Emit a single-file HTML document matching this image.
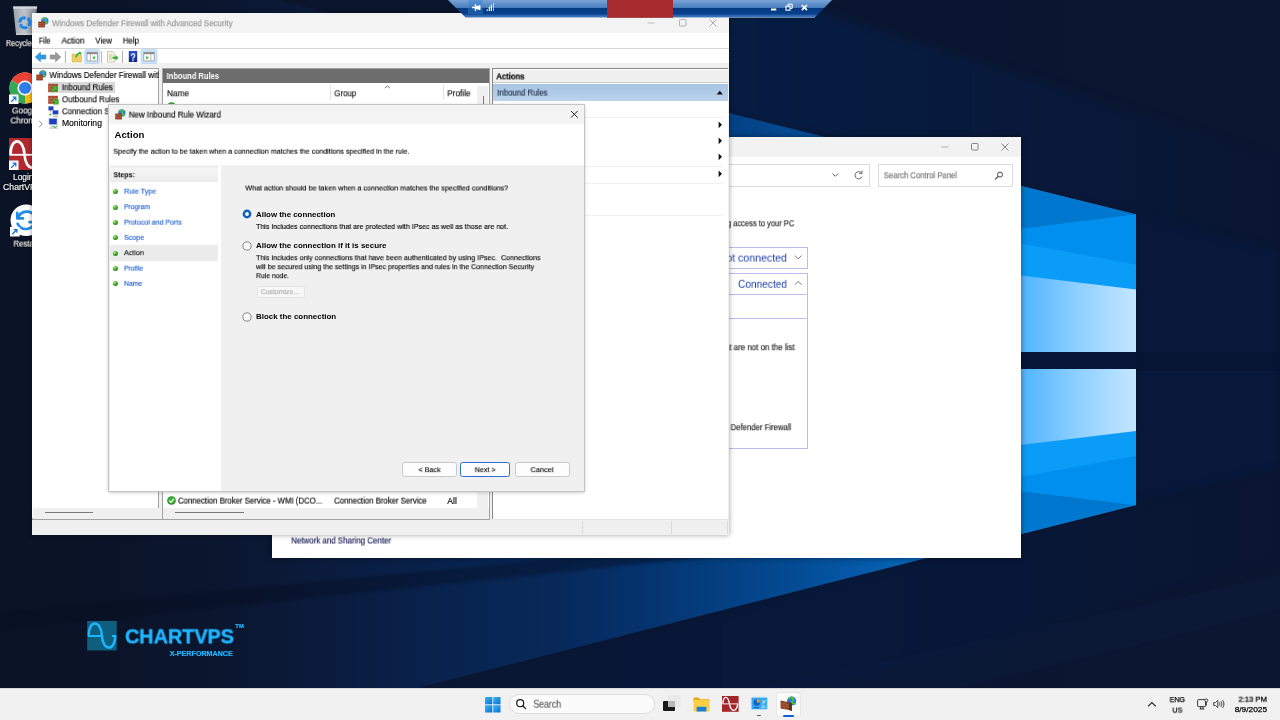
<!DOCTYPE html>
<html lang="en"><head><meta charset="utf-8"><title>Windows Defender Firewall - New Inbound Rule Wizard</title>
<style>
html,body{margin:0;padding:0;width:1280px;height:720px;overflow:hidden;background:#0a1530;font-family:'Liberation Sans',sans-serif;}
#scr{position:absolute;left:0;top:0;width:1280px;height:720px;overflow:hidden;}
.a{position:absolute;}
.t{position:absolute;white-space:pre;transform-origin:0 0;will-change:transform;-webkit-text-stroke:0.14px currentColor;}
svg{position:absolute;overflow:visible;}
</style></head><body><div id="scr">
<svg class="a" style="left:0;top:0" width="1280" height="720" viewBox="0 0 1280 720">
<defs>
<linearGradient id="bg" x1="0" y1="0" x2="1" y2="0">
<stop offset="0" stop-color="#0b1327"/><stop offset="0.35" stop-color="#0b152c"/><stop offset="0.7" stop-color="#0a1631"/><stop offset="1" stop-color="#0b1630"/>
</linearGradient>
<linearGradient id="beam" gradientUnits="userSpaceOnUse" x1="1021" y1="0" x2="50" y2="0">
<stop offset="0" stop-color="#0a74d2"/><stop offset="0.125" stop-color="#0562b4"/><stop offset="0.228" stop-color="#044c96"/><stop offset="0.33" stop-color="#043c7c"/><stop offset="0.392" stop-color="#05326c"/><stop offset="0.475" stop-color="#07295a"/><stop offset="0.588" stop-color="#08234e"/><stop offset="0.69" stop-color="#0a1d41"/><stop offset="0.845" stop-color="#0b1731" stop-opacity="0.6"/><stop offset="1" stop-color="#0b1327" stop-opacity="0"/>
</linearGradient>
<linearGradient id="beamshade" gradientUnits="userSpaceOnUse" x1="0" y1="150" x2="0" y2="560">
<stop offset="0" stop-color="#061a3c" stop-opacity="0.55"/><stop offset="0.25" stop-color="#061a3c" stop-opacity="0"/><stop offset="1" stop-color="#061a3c" stop-opacity="0"/>
</linearGradient>
<linearGradient id="upband" gradientUnits="userSpaceOnUse" x1="700" y1="0" x2="1280" y2="0">
<stop offset="0" stop-color="#061c42"/><stop offset="0.35" stop-color="#071b3f"/><stop offset="0.7" stop-color="#091838"/><stop offset="1" stop-color="#0a1632"/>
</linearGradient>
<linearGradient id="lowband" gradientUnits="userSpaceOnUse" x1="400" y1="0" x2="1280" y2="0">
<stop offset="0" stop-color="#0a1733"/><stop offset="0.5" stop-color="#07183a"/><stop offset="1" stop-color="#0a1632"/>
</linearGradient>
<linearGradient id="lite" gradientUnits="userSpaceOnUse" x1="1021" y1="0" x2="1136" y2="0">
<stop offset="0" stop-color="#4fb4ff"/><stop offset="0.5" stop-color="#8fd0ff"/><stop offset="1" stop-color="#c4e6ff"/>
</linearGradient>
</defs>
<filter id="soft2" color-interpolation-filters="sRGB" x="-5%" y="-20%" width="110%" height="140%"><feGaussianBlur stdDeviation="1.5"/></filter>
<filter id="soft" color-interpolation-filters="sRGB" x="-5%" y="-5%" width="110%" height="110%"><feGaussianBlur stdDeviation="4"/></filter>
<rect width="1280" height="720" fill="url(#bg)"/>
<!-- bluish bands around beam -->
<polygon points="600,0 785,0 1280,160 1280,251 1021,186 600,81" fill="url(#upband)" filter="url(#soft)"/>
<polygon points="1136,214 1280,251 1280,470 1136,505" fill="#07183b" filter="url(#soft)"/>
<polygon points="1021,534 1136,505 1280,470 1280,560 700,720 292,720" fill="url(#lowband)" filter="url(#soft)"/>
<rect x="1136" y="352" width="144" height="19" fill="#061430" opacity="0.7"/>
<!-- light beam -->
<polygon points="1021,186 277,0 0,0 0,720 292,720 1021,534" fill="url(#beam)"/>
<!-- faint floor streaks -->
<polygon points="0,612 720,543 720,556 0,630" fill="#050c1e" opacity="0.38" filter="url(#soft2)"/>
<polygon points="760,688 1280,575 1280,610 960,688" fill="#0c1f44" opacity="0.3"/>
<!-- window panes -->
<g>
<polygon points="1021,186 1136,214.5 1136,352 1021,352" fill="#0a9cf6"/>
<polygon points="1021,186 1136,214.5 1021,229" fill="#0077ce"/>
<polygon points="1021,229 1136,214.5 1136,264.5 1021,243.5" fill="#008fee"/>
<polygon points="1021,275.5 1136,289.5 1136,352 1021,352" fill="url(#lite)"/>
<polygon points="1021,369 1136,369 1136,505 1021,534" fill="#0a9cf6"/>
<polygon points="1021,534 1136,505 1021,491" fill="#0077ce"/>
<polygon points="1021,491 1136,505 1136,456 1021,477" fill="#008fee"/>
<polygon points="1021,369 1136,369 1136,431 1021,445" fill="url(#lite)"/>
<rect x="1021" y="352" width="115" height="17" fill="#07173a"/>
</g>
</svg>
<svg class="a" style="left:9px;top:5px" width="32" height="32" viewBox="0 0 32 32">
<defs><linearGradient id="bin" x1="0" y1="0" x2="1" y2="0"><stop offset="0" stop-color="#a4aab2"/><stop offset="0.45" stop-color="#c9ced4"/><stop offset="1" stop-color="#8e949d"/></linearGradient></defs>
<polygon points="4.1,1.4 28.1,1.4 25,29.9 7.1,29.9" fill="url(#bin)" opacity="0.95"/>
<polygon points="4.1,1.4 28.1,1.4 27.85,3.8 4.35,3.8" fill="#d3d7db"/>
<polygon points="7,28.6 25.1,28.6 25,29.9 7.1,29.9" fill="#d3d7db" opacity="0.7"/>
<g fill="none" stroke="#1c86e6" stroke-width="3"><path d="M18.45 13.36A5.00 5.00 0 0 1 20.56 19.15" /><polygon points="19.15,21.32 23.03,19.95 18.08,18.34" fill="#1c86e6" stroke="none"/><path d="M18.15 22.01A5.00 5.00 0 0 1 12.08 20.95" /><polygon points="10.91,18.64 10.15,22.69 14.02,19.21" fill="#1c86e6" stroke="none"/><path d="M10.80 17.43A5.00 5.00 0 0 1 14.76 12.71" /><polygon points="17.35,12.84 14.22,10.17 15.30,15.25" fill="#1c86e6" stroke="none"/></g>
</svg><span class="t" style="left:6px;top:37px;font-size:8.4px;line-height:12px;color:#fff;transform:translate(0.00px,0.19px) scaleX(0.8594);text-shadow:0 0 2px #000,0.5px 0.5px 1px #000;">Recycle Bin</span><svg class="a" style="left:9px;top:72px" width="32" height="32" viewBox="0 0 32 32">
<circle cx="16" cy="16" r="15.5" fill="#fff"/>
<path d="M16 16 L2.6 8.2 A15.5 15.5 0 0 1 29.4 8.2 Z" fill="#ea4335"/>
<path d="M16 16 L29.4 8.2 A15.5 15.5 0 0 1 16 31.5 Z" fill="#fbbc05"/>
<path d="M16 16 L16 31.5 A15.5 15.5 0 0 1 2.6 8.2 Z" fill="#34a853"/>
<path d="M16 8.2 L29.4 8.2 A15.5 15.5 0 0 0 2.6 8.2 Z" fill="#ea4335"/>
<circle cx="16" cy="16" r="7.6" fill="#fff"/><circle cx="16" cy="16" r="6" fill="#2f7de8"/>
<rect x="0" y="22.5" width="9.5" height="9.5" fill="#fff"/><path d="M2.2 29.8l4.2-4.2M3.6 25.2h3.2v3.2" stroke="#1a73d8" stroke-width="1.3" fill="none"/>
</svg><span class="t" style="left:12px;top:104px;font-size:8.4px;line-height:12px;color:#fff;transform:translate(0.00px,0.49px) scaleX(0.9809);text-shadow:0 0 2px #000,0.5px 0.5px 1px #000;">Google</span><span class="t" style="left:10px;top:114px;font-size:8.4px;line-height:12px;color:#fff;transform:translate(0.50px,0.49px) scaleX(0.9733);text-shadow:0 0 2px #000,0.5px 0.5px 1px #000;">Chrome</span><svg class="a" style="left:9px;top:138px" width="32" height="32" viewBox="0 0 32 32">
<rect width="32" height="32" fill="#b3282d"/>
<path d="M1.500 16.500 C1.500 -1 14.500 -1 15.500 16.500 S 29.500 34 30.800 16.500" fill="none" stroke="#fff" stroke-width="2.700"/>
<path d="M0.500 16.800h31" stroke="#fff" stroke-width="1.800"/>
<rect x="0" y="22.5" width="9.5" height="9.5" fill="#fff"/><path d="M2.2 29.8l4.2-4.2M3.6 25.2h3.2v3.2" stroke="#1a73d8" stroke-width="1.3" fill="none"/>
</svg><span class="t" style="left:13px;top:171px;font-size:8.4px;line-height:12px;color:#fff;transform:translate(0.00px,0.19px) scaleX(1.0000);text-shadow:0 0 2px #000,0.5px 0.5px 1px #000;">Login</span><span class="t" style="left:3px;top:180px;font-size:8.4px;line-height:12px;color:#fff;transform:translate(0.10px,0.79px) scaleX(1.0309);text-shadow:0 0 2px #000,0.5px 0.5px 1px #000;">ChartVPS</span><svg class="a" style="left:10px;top:204px" width="32.500" height="32.500" viewBox="0 0 32 32">
<circle cx="16" cy="16" r="15.5" fill="#fff"/>
<path d="M8 13.5 A9 9 0 0 1 24.5 12.5 M24 19 A9 9 0 0 1 7.5 19.5" fill="none" stroke="#1e8be8" stroke-width="2.6" stroke-linecap="round"/>
<path d="M7.2 8.6v5.6h5.6" fill="none" stroke="#1e8be8" stroke-width="2.6" stroke-linecap="round" stroke-linejoin="round"/>
<path d="M24.8 23.4v-5.6h-5.6" fill="none" stroke="#1e8be8" stroke-width="2.6" stroke-linecap="round" stroke-linejoin="round"/>
<rect x="0" y="22.5" width="9.5" height="9.5" fill="#fff"/><path d="M2.2 29.8l4.2-4.2M3.6 25.2h3.2v3.2" stroke="#1a73d8" stroke-width="1.3" fill="none"/>
</svg><span class="t" style="left:13px;top:237px;font-size:8.4px;line-height:12px;color:#fff;transform:translate(0.50px,0.59px) scaleX(0.9222);text-shadow:0 0 2px #000,0.5px 0.5px 1px #000;">Restart</span><svg class="a" style="left:87px;top:621px" width="30" height="30" viewBox="0 0 30 30">
<rect x="0.2" width="29.5" height="29.4" fill="#0e5f7f"/>
<path d="M1.6 14.6 C1.6 -1.400 14 -1.400 14.900 14.600 S 28.300 30.600 28.300 14.600" fill="none" stroke="#1cb6ff" stroke-width="2.500"/>
<path d="M1 14.900h14M25 14.900h4" stroke="#1cb6ff" stroke-width="2"/>
</svg><span class="t" style="left:125px;top:623px;font-size:20.2px;line-height:27px;color:#20b6ff;font-weight:700;-webkit-text-stroke:0;transform:translate(0.00px,0.36px) scaleX(0.9816);-webkit-text-stroke:0.45px #20b6ff;">CHARTVPS</span><span class="t" style="left:235px;top:622px;font-size:5.2px;line-height:8px;color:#20b6ff;font-weight:700;-webkit-text-stroke:0;transform:translate(0.30px,0.46px) scaleX(1.1333);-webkit-text-stroke:0.2px #20b6ff;">TM</span><span class="t" style="left:169px;top:649px;font-size:6.4px;line-height:10px;color:#20b6ff;font-weight:700;-webkit-text-stroke:0;transform:translate(0.70px,0.10px) scaleX(1.1177);-webkit-text-stroke:0.2px #20b6ff;">X-PERFORMANCE</span><div class="a" style="left:272px;top:137px;width:749px;height:421px;background:#fff;box-shadow:0 0 6px rgba(0,0,0,0.45);"></div><div class="a" style="left:272px;top:137px;width:749px;height:20px;background:#f2f2f2;"></div><svg class="a" style="left:930px;top:137px" width="91" height="20" viewBox="0 0 91 20">
<path d="M11.5 10h7" stroke="#a8a8a8" stroke-width="0.9"/>
<rect x="41.5" y="6.5" width="6.5" height="6.5" rx="0.8" fill="none" stroke="#777" stroke-width="0.9"/>
<path d="M71.5 6.5l7 7M78.5 6.5l-7 7" stroke="#777" stroke-width="0.9"/>
</svg><div class="a" style="left:600px;top:164px;width:268px;height:20.500px;border:1px solid #dcdcdc;background:#fff;"></div><div class="a" style="left:878px;top:164px;width:133px;height:20.500px;border:1px solid #dcdcdc;background:#fff;"></div><svg class="a" style="left:828px;top:168px" width="40" height="14" viewBox="0 0 40 14">
<path d="M4.5 5.5l2.8 2.8 2.8-2.8" fill="none" stroke="#555" stroke-width="0.9"/>
<path d="M33.6 5.2a3.6 3.6 0 1 0 0.4 3.4" fill="none" stroke="#555" stroke-width="0.9"/><path d="M34 2.6v2.8h-2.8" fill="none" stroke="#555" stroke-width="0.9"/>
</svg><span class="t" style="left:883px;top:169px;font-size:8.4px;line-height:12px;color:#6d6d6d;transform:translate(0.80px,0.29px) scaleX(0.9195);">Search Control Panel</span><svg class="a" style="left:993px;top:170px" width="12" height="12" viewBox="0 0 12 12"><circle cx="7" cy="4.6" r="2.5" fill="none" stroke="#444" stroke-width="1"/><path d="M5.2 6.4l-3 3" stroke="#444" stroke-width="1.2"/></svg><span class="t" style="left:441px;top:217px;font-size:8.4px;line-height:12px;color:#1a1a1a;transform:translate(0.50px,0.29px) scaleX(0.9941);">Help protect your PC by preventing hackers or malicious software from gaining</span><span class="t" style="left:733px;top:217px;font-size:8.4px;line-height:12px;color:#1a1a1a;transform:translate(0.20px,0.29px) scaleX(0.8975);">access to your PC</span><div class="a" style="left:420px;top:247px;width:386px;height:20px;border:1px solid #bcbcee;"></div><div class="a" style="left:420px;top:273px;width:386px;height:174px;border:1px solid #bcbcee;"></div><div class="a" style="left:420px;top:294px;width:387px;height:1px;background:#bcbcee;"></div><div class="a" style="left:420px;top:318px;width:387px;height:1px;background:#bcbcee;"></div><span class="t" style="left:718px;top:249px;font-size:11.3px;line-height:16px;color:#1c3fa6;transform:translate(0.50px,0.57px) scaleX(0.9402);-webkit-text-stroke:0;">Not connected</span><span class="t" style="left:738px;top:275px;font-size:11.3px;line-height:16px;color:#1c3fa6;transform:translate(0.00px,0.77px) scaleX(0.8965);-webkit-text-stroke:0;">Connected</span><svg class="a" style="left:793px;top:252px" width="12" height="40" viewBox="0 0 12 40">
<path d="M2 3.6l3.2 3.2 3.2-3.2" fill="none" stroke="#666" stroke-width="0.9"/>
<path d="M2 32.6l3.2-3.2 3.2 3.2" fill="none" stroke="#666" stroke-width="0.9"/></svg><span class="t" style="left:617px;top:341px;font-size:8.4px;line-height:12px;color:#1a1a1a;transform:translate(0.00px,0.19px) scaleX(0.9219);">Block all connections to apps that</span><span class="t" style="left:733px;top:341px;font-size:8.4px;line-height:12px;color:#1a1a1a;transform:translate(0.60px,0.19px) scaleX(0.9494);">are not on the list</span><span class="t" style="left:699px;top:421px;font-size:8.4px;line-height:12px;color:#1a1a1a;transform:translate(0.00px,0.19px) scaleX(0.8680);">Windows</span><span class="t" style="left:730px;top:421px;font-size:8.4px;line-height:12px;color:#1a1a1a;transform:translate(0.60px,0.19px) scaleX(0.9232);">Defender Firewall</span><span class="t" style="left:291px;top:534px;font-size:8.4px;line-height:12px;color:#101050;transform:translate(0.30px,0.49px) scaleX(0.9433);">Network and Sharing Center</span><div class="a" style="left:32px;top:13px;width:697px;height:522px;background:#f0f0f0;box-shadow:0 0 5px rgba(0,0,0,0.4);"></div><div class="a" style="left:32px;top:13px;width:697px;height:20px;background:#f3f3f3;"></div><div class="a" style="left:32px;top:33px;width:697px;height:30px;background:#fff;"></div><div class="a" style="left:32px;top:48px;width:697px;height:1px;background:#d4d4d4;"></div><svg class="a" style="left:37.5px;top:17px" width="11" height="11" viewBox="0 0 11 11">
<circle cx="6.8" cy="3.9" r="3.7" fill="#2e7fd6"/><path d="M4.6 2.2c1.2-1.6 3-1.2 3.2 0.2s-1 1.6-0.6 2.6 2 0.4 2.4 1.6" fill="none" stroke="#56c13c" stroke-width="1.5"/>
<rect x="0.3" y="4.6" width="6.6" height="5.8" fill="#8c3a1f"/><path d="M0.3 6.5h6.6M0.3 8.5h6.6M3.6 4.6v1.9M2 6.5v2M5.2 6.5v2M3.6 8.5v1.9" stroke="#c4734a" stroke-width="0.5"/>
</svg><span class="t" style="left:52px;top:17px;font-size:8.4px;line-height:12px;color:#949494;transform:translate(0.00px,0.19px) scaleX(0.9457);">Windows Defender Firewall with Advanced Security</span><svg class="a" style="left:630px;top:13px" width="99" height="20" viewBox="0 0 99 20">
<path d="M17.5 10h7" stroke="#b5b5b5" stroke-width="0.9"/>
<rect x="49.5" y="6.5" width="6.5" height="6.5" rx="0.8" fill="none" stroke="#a8a8a8" stroke-width="0.9"/>
<path d="M79.5 6.5l7 7M86.500 6.5l-7 7" stroke="#a8a8a8" stroke-width="0.9"/>
</svg><span class="t" style="left:38px;top:34px;font-size:8.4px;line-height:12px;color:#000;transform:translate(0.80px,0.59px) scaleX(0.8741);">File</span><span class="t" style="left:61px;top:34px;font-size:8.4px;line-height:12px;color:#000;transform:translate(0.50px,0.59px) scaleX(0.9922);">Action</span><span class="t" style="left:95px;top:34px;font-size:8.4px;line-height:12px;color:#000;transform:translate(0.30px,0.59px) scaleX(0.9270);">View</span><span class="t" style="left:122px;top:34px;font-size:8.4px;line-height:12px;color:#000;transform:translate(0.80px,0.59px) scaleX(0.9400);">Help</span><svg class="a" style="left:32px;top:49px" width="130" height="15" viewBox="0 0 130 15">
<defs><linearGradient id="hb" x1="0" y1="0" x2="0" y2="1"><stop offset="0" stop-color="#2a4fd0"/><stop offset="1" stop-color="#10247e"/></linearGradient></defs>
<path d="M3.2 8l5.2-4.8v2.8h5.4v4h-5.4v2.800z" fill="#2f9be8" stroke="#1b78c8" stroke-width="0.5"/>
<path d="M28.800 8l-5.200-4.800v2.800h-5.400v4h5.400v2.800z" fill="#9a9a9a" stroke="#7a7a7a" stroke-width="0.5"/>
<path d="M33.400 2v12" stroke="#9a9a9a" stroke-width="0.8"/>
<path d="M40 5h3.200l1 1.200h5.300v6.800h-9.500z" fill="#f0d066" stroke="#c9a63a" stroke-width="0.5"/><path d="M43.200 8.200c0.600-2.600 2-4 4-4.600l-0.600-1.200 3 1.200-1.400 2.600-0.400-1.200c-1.600 0.600-2.600 1.600-3.200 3.400z" fill="#37b024"/>
<rect x="52.600" y="0.500" width="15" height="14" rx="1.500" fill="#cfe6fa" stroke="#a5cdf0" stroke-width="0.600"/>
<rect x="55" y="3.200" width="10.400" height="8.800" fill="#fdfdfd" stroke="#8c8c8c" stroke-width="0.700"/><rect x="55" y="3.200" width="10.400" height="2" fill="#8c8c8c"/><path d="M58.400 5.200v6.800" stroke="#8c8c8c" stroke-width="0.600"/><path d="M62.800 7l-2.600 1.800 2.600 1.800z" fill="#2fb12a"/>
<path d="M69.600 2v12" stroke="#9a9a9a" stroke-width="0.800"/>
<path d="M75.500 2.600h5.200l2 2v8.400h-7.200z" fill="#fbf7e4" stroke="#a9a48a" stroke-width="0.600"/><path d="M76.800 6h4M76.800 8h3M76.800 10h3" stroke="#9a9580" stroke-width="0.600"/><path d="M80.500 7.800h3v-1.800l3 2.800-3 2.800v-1.800h-3z" fill="#2fb12a"/>
<path d="M90.500 2v12" stroke="#9a9a9a" stroke-width="0.800"/>
<rect x="96.800" y="2" width="8.400" height="11" fill="url(#hb)"/>
<rect x="109" y="0.500" width="16" height="14" rx="1.500" fill="#cfe6fa" stroke="#a5cdf0" stroke-width="0.600"/>
<rect x="111.800" y="3.200" width="10.400" height="8.800" fill="#fdfdfd" stroke="#8c8c8c" stroke-width="0.700"/><rect x="111.800" y="3.200" width="10.400" height="2" fill="#8c8c8c"/><path d="M118.800 5.200v6.800" stroke="#8c8c8c" stroke-width="0.600"/><path d="M114.200 7l2.600 1.800-2.600 1.800z" fill="#2fb12a"/>
</svg><span class="t" style="left:130px;top:49px;font-size:11px;line-height:16px;color:#fff;font-weight:700;-webkit-text-stroke:0;transform:translate(0.30px,0.19px) scaleX(0.8167);">?</span><div class="a" style="left:32px;top:68px;width:127px;height:451px;background:#fff;border-top:1px solid #a3a3a3;border-right:1px solid #a3a3a3;border-bottom:1px solid #a3a3a3;box-sizing:border-box;"></div><svg class="a" style="left:36px;top:70px" width="11" height="11" viewBox="0 0 11 11">
<circle cx="6.8" cy="3.9" r="3.7" fill="#2e7fd6"/><path d="M4.6 2.2c1.2-1.6 3-1.2 3.2 0.2s-1 1.6-0.6 2.6 2 0.4 2.4 1.6" fill="none" stroke="#56c13c" stroke-width="1.5"/>
<rect x="0.3" y="4.6" width="6.6" height="5.8" fill="#8c3a1f"/><path d="M0.3 6.5h6.6M0.3 8.5h6.6M3.6 4.6v1.9M2 6.5v2M5.2 6.5v2M3.6 8.5v1.9" stroke="#c4734a" stroke-width="0.5"/>
</svg><div class="a" style="left:49px;top:69px;width:109.500px;height:12px;overflow:hidden;"><span class="t" style="left:0px;top:-1px;font-size:8.4px;line-height:12px;color:#000;transform:translate(0.40px,0.99px) scaleX(0.9483);">Windows Defender Firewall with Advanced Security</span></div><div class="a" style="left:47.500px;top:81.500px;width:67.500px;height:11.500px;background:#d9d9d9;"></div><svg class="a" style="left:48px;top:82.5px" width="11" height="10" viewBox="0 0 11 10">
<rect x="0.2" y="0.800" width="9.600" height="8" fill="#a8422a"/><path d="M0.200 3.400h9.600M0.200 6.200h9.600M3.200 0.800v2.600M6.800 0.800v2.600M1.600 3.400v2.800M5 3.400v2.800M8.400 3.400v2.800M3.200 6.200v2.600M6.800 6.200v2.600" stroke="#d98c6a" stroke-width="0.500"/>
<path d="M4 3.200h5v5l-1.600-1.400-2.400 2.600-1.800-1.800 2.600-2.400z" fill="#35c02a" stroke="#1d8a18" stroke-width="0.400"/></svg><svg class="a" style="left:48px;top:94.5px" width="11" height="10" viewBox="0 0 11 10">
<rect x="0.2" y="0.800" width="9.600" height="8" fill="#a8422a"/><path d="M0.200 3.400h9.600M0.200 6.200h9.600M3.200 0.800v2.600M6.800 0.800v2.600M1.600 3.400v2.800M5 3.400v2.800M8.400 3.400v2.800M3.200 6.200v2.600M6.800 6.200v2.600" stroke="#d98c6a" stroke-width="0.500"/>
<path d="M10.400 9.200h-5l1.600-1.600-2.600-2.400 1.800-1.800 2.600 2.600 1.600-1.600z" fill="#35c02a" stroke="#1d8a18" stroke-width="0.400"/></svg><span class="t" style="left:61px;top:81px;font-size:8.4px;line-height:12px;color:#000;transform:translate(0.90px,0.19px) scaleX(0.9423);">Inbound Rules</span><span class="t" style="left:61px;top:93px;font-size:8.4px;line-height:12px;color:#000;transform:translate(0.90px,0.29px) scaleX(0.9499);">Outbound Rules</span><span class="t" style="left:61px;top:105px;font-size:8.4px;line-height:12px;color:#000;transform:translate(0.90px,0.29px) scaleX(0.9483);">Connection Security Rules</span><span class="t" style="left:61px;top:117px;font-size:8.4px;line-height:12px;color:#000;transform:translate(0.90px,0.39px) scaleX(1.0228);">Monitoring</span><svg class="a" style="left:48px;top:106px" width="11" height="11" viewBox="0 0 11 11">
<rect x="0.500" y="0.300" width="5" height="4" fill="#1b3fc4" stroke="#9aa6c8" stroke-width="0.500"/><rect x="4.800" y="4.200" width="5.400" height="4.200" fill="#1b3fc4" stroke="#9aa6c8" stroke-width="0.500"/>
<path d="M0.600 9.200l1.600-2 1.600 2z" fill="#35b02a"/><path d="M5 10.300h5" stroke="#8a8a8a" stroke-width="0.800"/><path d="M2.600 4.500v2" stroke="#666" stroke-width="0.500"/></svg><svg class="a" style="left:48px;top:118px" width="11" height="11" viewBox="0 0 11 11">
<rect x="1" y="0.400" width="8" height="6" fill="#1b3fc4" stroke="#a9b4d0" stroke-width="0.700"/><path d="M3 8.200h4.500M1.500 10h8" stroke="#9aa0a8" stroke-width="0.900"/><path d="M5.600 8.600l1.400 1.200 2.400-2.400" fill="none" stroke="#35b02a" stroke-width="1"/></svg><svg class="a" style="left:38px;top:119.500px" width="6" height="8" viewBox="0 0 6 8"><path d="M1.200 0.800l3 3.200-3 3.200" fill="none" stroke="#7a7a7a" stroke-width="0.900"/></svg><div class="a" style="left:33px;top:507.500px;width:125.500px;height:11px;background:#f0f0f0;"></div><div class="a" style="left:45px;top:512px;width:47.500px;height:1px;background:#7a7a7a;"></div><div class="a" style="left:162px;top:68px;width:327.500px;height:451px;background:#fff;border:1px solid #a3a3a3;box-sizing:border-box;"></div><div class="a" style="left:162.500px;top:68.500px;width:326px;height:14.500px;background:#6d6d6d;"></div><span class="t" style="left:166px;top:69px;font-size:8.4px;line-height:12px;color:#fff;font-weight:700;-webkit-text-stroke:0;transform:translate(0.60px,0.99px) scaleX(0.9010);">Inbound Rules</span><div class="a" style="left:329.500px;top:85px;width:1px;height:15px;background:#e2e2e2;"></div><div class="a" style="left:443px;top:85px;width:1px;height:15px;background:#e2e2e2;"></div><span class="t" style="left:167px;top:87px;font-size:8.4px;line-height:12px;color:#0a0a0a;transform:translate(0.00px,0.29px) scaleX(0.9846);">Name</span><span class="t" style="left:334px;top:87px;font-size:8.4px;line-height:12px;color:#0a0a0a;transform:translate(0.30px,0.29px) scaleX(0.9450);">Group</span><span class="t" style="left:447px;top:87px;font-size:8.4px;line-height:12px;color:#0a0a0a;transform:translate(0.20px,0.29px) scaleX(0.9811);">Profile</span><svg class="a" style="left:384px;top:85px" width="7" height="4" viewBox="0 0 7 4"><path d="M0.800 3.200l2.600-2.400 2.600 2.400" fill="none" stroke="#555" stroke-width="0.800"/></svg><div class="a" style="left:477.400px;top:86px;width:11px;height:421.500px;background:#f0f0f0;"></div><div class="a" style="left:482.500px;top:96px;width:1px;height:12px;background:#7a7a7a;"></div><div class="a" style="left:163px;top:507.500px;width:325.500px;height:11px;background:#f0f0f0;"></div><div class="a" style="left:175px;top:512px;width:69px;height:1px;background:#7a7a7a;"></div><svg class="a" style="left:167px;top:101.5px" width="9" height="9" viewBox="0 0 9 9"><circle cx="4.500" cy="4.500" r="4.300" fill="#238a1f"/><circle cx="4.500" cy="4.300" r="3.300" fill="#3cb038"/><path d="M2.300 4.600l1.600 1.700 3-3.500" fill="none" stroke="#fff" stroke-width="1.200"/></svg><svg class="a" style="left:166.8px;top:496px" width="9" height="9" viewBox="0 0 9 9"><circle cx="4.500" cy="4.500" r="4.300" fill="#238a1f"/><circle cx="4.500" cy="4.300" r="3.300" fill="#3cb038"/><path d="M2.300 4.600l1.600 1.700 3-3.500" fill="none" stroke="#fff" stroke-width="1.200"/></svg><span class="t" style="left:178px;top:494px;font-size:8.4px;line-height:12px;color:#000;transform:translate(0.00px,0.59px) scaleX(0.9304);">Connection Broker Service - WMI (DCO...</span><span class="t" style="left:334px;top:494px;font-size:8.4px;line-height:12px;color:#000;transform:translate(0.20px,0.59px) scaleX(0.9275);">Connection Broker Service</span><span class="t" style="left:447px;top:494px;font-size:8.4px;line-height:12px;color:#000;transform:translate(0.30px,0.59px) scaleX(1.0201);">All</span><div class="a" style="left:163px;top:488px;width:314px;height:6px;overflow:hidden;"><span class="t" style="left:15px;top:-9px;font-size:8.4px;line-height:12px;color:#000;transform:translate(0.00px,0.49px) scaleX(0.9137);">Connection Broker Service - WMI (TCP-In)</span><span class="t" style="left:171px;top:-9px;font-size:8.4px;line-height:12px;color:#000;transform:translate(0.20px,0.49px) scaleX(0.9275);">Connection Broker Service</span></div><div class="a" style="left:491.500px;top:68px;width:236px;height:451px;background:#fff;border-left:1.500px solid #8a8a8a;border-top:1.500px solid #8a8a8a;box-sizing:border-box;"></div><div class="a" style="left:493px;top:69.500px;width:234.500px;height:12.500px;background:#f0f0f0;border-bottom:1px solid #c8c8c8;"></div><span class="t" style="left:496px;top:70px;font-size:8.4px;line-height:12px;color:#000;font-weight:700;-webkit-text-stroke:0;transform:translate(0.30px,0.39px) scaleX(0.9180);-webkit-text-stroke:0.2px #000;">Actions</span><div class="a" style="left:493px;top:84px;width:234.500px;height:16.500px;background:linear-gradient(#a5c3e2,#bcd3ec);"></div><span class="t" style="left:497px;top:86px;font-size:8.4px;line-height:12px;color:#1a2a44;transform:translate(0.20px,0.59px) scaleX(0.9312);">Inbound Rules</span><svg class="a" style="left:716px;top:90px" width="8" height="5" viewBox="0 0 8 5"><path d="M0.600 4.600l3.200-3.800 3.200 3.800z" fill="#111"/></svg><svg class="a" style="left:718px;top:121.2px" width="5" height="8" viewBox="0 0 5 8"><path d="M0.600 0.400l3.400 3.400-3.400 3.400z" fill="#111"/></svg><svg class="a" style="left:718px;top:136.89999999999998px" width="5" height="8" viewBox="0 0 5 8"><path d="M0.600 0.400l3.400 3.400-3.400 3.400z" fill="#111"/></svg><svg class="a" style="left:718px;top:153.2px" width="5" height="8" viewBox="0 0 5 8"><path d="M0.600 0.400l3.400 3.400-3.400 3.400z" fill="#111"/></svg><svg class="a" style="left:718px;top:170.0px" width="5" height="8" viewBox="0 0 5 8"><path d="M0.600 0.400l3.400 3.400-3.400 3.400z" fill="#111"/></svg><div class="a" style="left:497px;top:117px;width:226px;height:1px;background:#f0f0f0;"></div><div class="a" style="left:497px;top:165.5px;width:226px;height:1px;background:#f0f0f0;"></div><div class="a" style="left:497px;top:182.5px;width:226px;height:1px;background:#f0f0f0;"></div><div class="a" style="left:497px;top:215px;width:226px;height:1px;background:#f0f0f0;"></div><svg class="a" style="left:496px;top:102.500px" width="9" height="4" viewBox="0 0 9 4"><path d="M1 4l2-2.500 2.500 1 2-1.500" fill="none" stroke="#e8a33a" stroke-width="1.200"/></svg><div class="a" style="left:32px;top:519px;width:458px;height:1px;background:#a3a3a3;"></div><div class="a" style="left:491.500px;top:519px;width:237.500px;height:1px;background:#e3e3e3;"></div><div class="a" style="left:32px;top:520px;width:697px;height:15px;background:#f0f0f0;"></div><div class="a" style="left:581.5px;top:521px;width:1px;height:13px;background:#dadada;"></div><div class="a" style="left:670.5px;top:521px;width:1px;height:13px;background:#dadada;"></div><div class="a" style="left:726.8px;top:521px;width:1px;height:13px;background:#dadada;"></div><div class="a" style="left:109.200px;top:104.500px;width:475.200px;height:386.300px;background:#f0f0f0;box-shadow:0 1px 4px rgba(0,0,0,0.3);outline:0.500px solid #c4c4c4;"></div><div class="a" style="left:109.200px;top:104.500px;width:475.200px;height:19.500px;background:#f3f3f3;"></div><div class="a" style="left:109.200px;top:124px;width:475.200px;height:41px;background:#fff;"></div><svg class="a" style="left:114.5px;top:108.5px" width="11" height="11" viewBox="0 0 11 11">
<circle cx="6.8" cy="3.9" r="3.7" fill="#2e7fd6"/><path d="M4.6 2.2c1.2-1.6 3-1.2 3.2 0.2s-1 1.6-0.6 2.6 2 0.4 2.4 1.6" fill="none" stroke="#56c13c" stroke-width="1.5"/>
<rect x="0.3" y="4.6" width="6.6" height="5.8" fill="#8c3a1f"/><path d="M0.3 6.5h6.6M0.3 8.5h6.6M3.6 4.6v1.9M2 6.5v2M5.2 6.5v2M3.6 8.5v1.9" stroke="#c4734a" stroke-width="0.5"/>
</svg><span class="t" style="left:128px;top:108px;font-size:8.4px;line-height:12px;color:#000;transform:translate(0.80px,0.59px) scaleX(0.9456);">New Inbound Rule Wizard</span><svg class="a" style="left:569.500px;top:110px" width="9" height="9" viewBox="0 0 9 9"><path d="M1 1l6.600 6.600M7.600 1l-6.600 6.600" stroke="#111" stroke-width="0.900"/></svg><span class="t" style="left:114px;top:127px;font-size:9.3px;line-height:14px;color:#000;font-weight:700;-webkit-text-stroke:0;transform:translate(0.60px,0.87px) scaleX(1.0269);">Action</span><span class="t" style="left:113px;top:145px;font-size:7.6px;line-height:12px;color:#000;transform:translate(0.30px,0.75px) scaleX(0.9418);">Specify the action to be taken when a connection matches the conditions specified in the rule.</span><div class="a" style="left:218px;top:165px;width:3px;height:325.800px;background:#fff;"></div><div class="a" style="left:109.500px;top:168px;width:108.500px;height:322.500px;background:#fff;"></div><div class="a" style="left:109.500px;top:168px;width:108.500px;height:14px;background:linear-gradient(#f6f6f6,#ececec);"></div><span class="t" style="left:113px;top:169px;font-size:7.6px;line-height:12px;color:#000;font-weight:700;-webkit-text-stroke:0;transform:translate(0.50px,0.25px) scaleX(0.9174);">Steps:</span><div class="a" style="left:109.500px;top:245px;width:108.500px;height:15.500px;background:#ececec;"></div><svg class="a" style="left:0;top:0" width="0" height="0"><defs><radialGradient id="gb" cx="0.350" cy="0.300" r="0.800"><stop offset="0" stop-color="#b5f08a"/><stop offset="0.450" stop-color="#45b82a"/><stop offset="1" stop-color="#1f7a12"/></radialGradient></defs></svg><svg class="a" style="left:112px;top:188.2px" width="7" height="7" viewBox="0 0 7 7"><circle cx="3.400" cy="3.500" r="2.500" fill="url(#gb)"/></svg><span class="t" style="left:124px;top:185px;font-size:7.6px;line-height:12px;color:#1a5fd0;transform:translate(0.00px,0.65px) scaleX(0.9483);">Rule Type</span><svg class="a" style="left:112px;top:203.7px" width="7" height="7" viewBox="0 0 7 7"><circle cx="3.400" cy="3.500" r="2.500" fill="url(#gb)"/></svg><span class="t" style="left:124px;top:201px;font-size:7.6px;line-height:12px;color:#1a5fd0;transform:translate(0.00px,0.15px) scaleX(0.8927);">Program</span><svg class="a" style="left:112px;top:219.2px" width="7" height="7" viewBox="0 0 7 7"><circle cx="3.400" cy="3.500" r="2.500" fill="url(#gb)"/></svg><span class="t" style="left:124px;top:216px;font-size:7.6px;line-height:12px;color:#1a5fd0;transform:translate(0.00px,0.65px) scaleX(0.9234);">Protocol and Ports</span><svg class="a" style="left:112px;top:234.39999999999998px" width="7" height="7" viewBox="0 0 7 7"><circle cx="3.400" cy="3.500" r="2.500" fill="url(#gb)"/></svg><span class="t" style="left:124px;top:231px;font-size:7.6px;line-height:12px;color:#1a5fd0;transform:translate(0.00px,0.85px) scaleX(0.9421);">Scope</span><svg class="a" style="left:112px;top:249.7px" width="7" height="7" viewBox="0 0 7 7"><circle cx="3.400" cy="3.500" r="2.500" fill="url(#gb)"/></svg><span class="t" style="left:124px;top:247px;font-size:7.6px;line-height:12px;color:#111;transform:translate(0.00px,0.15px) scaleX(0.9380);">Action</span><svg class="a" style="left:112px;top:265.2px" width="7" height="7" viewBox="0 0 7 7"><circle cx="3.400" cy="3.500" r="2.500" fill="url(#gb)"/></svg><span class="t" style="left:124px;top:262px;font-size:7.6px;line-height:12px;color:#1a5fd0;transform:translate(0.00px,0.65px) scaleX(0.8964);">Profile</span><svg class="a" style="left:112px;top:280.4px" width="7" height="7" viewBox="0 0 7 7"><circle cx="3.400" cy="3.500" r="2.500" fill="url(#gb)"/></svg><span class="t" style="left:124px;top:277px;font-size:7.6px;line-height:12px;color:#1a5fd0;transform:translate(0.00px,0.85px) scaleX(0.9030);">Name</span><span class="t" style="left:245px;top:182px;font-size:7.6px;line-height:12px;color:#000;transform:translate(0.30px,0.45px) scaleX(0.9479);">What action should be taken when a connection matches the specified conditions?</span><svg class="a" style="left:242.3px;top:209.4px" width="10" height="10" viewBox="0 0 10 10"><circle cx="5" cy="5" r="4.400" fill="#0f5fc0"/><circle cx="5" cy="5" r="1.900" fill="#fff"/></svg><span class="t" style="left:256px;top:208px;font-size:7.6px;line-height:12px;color:#000;font-weight:700;-webkit-text-stroke:0;transform:translate(0.00px,0.75px) scaleX(1.0383);">Allow the connection</span><span class="t" style="left:256px;top:220px;font-size:7.6px;line-height:12px;color:#000;transform:translate(0.00px,0.95px) scaleX(0.9365);">This includes connections that are protected with IPsec as well as those are not.</span><svg class="a" style="left:242.3px;top:241px" width="10" height="10" viewBox="0 0 10 10"><circle cx="5" cy="5" r="4.100" fill="#fbfbfb" stroke="#6a6a6a" stroke-width="0.800"/></svg><span class="t" style="left:256px;top:240px;font-size:7.6px;line-height:12px;color:#000;font-weight:700;-webkit-text-stroke:0;transform:translate(0.00px,0.25px) scaleX(1.0448);">Allow the connection if it is secure</span><span class="t" style="left:256px;top:252px;font-size:7.6px;line-height:12px;color:#000;transform:translate(0.00px,0.15px) scaleX(0.9389);">This includes only connections that have been authenticated by using IPsec.  Connections</span><span class="t" style="left:256px;top:261px;font-size:7.6px;line-height:12px;color:#000;transform:translate(0.00px,0.15px) scaleX(0.9250);">will be secured using the settings in IPsec properties and rules in the Connection Security</span><span class="t" style="left:256px;top:270px;font-size:7.6px;line-height:12px;color:#000;transform:translate(0.00px,0.15px) scaleX(0.8983);">Rule node.</span><div class="a" style="left:257px;top:286px;width:47.500px;height:12px;background:#f7f7f7;border:0.700px solid #e4e4e4;border-radius:2px;box-sizing:border-box;"></div><span class="t" style="left:260px;top:286px;font-size:7.6px;line-height:12px;color:#a9a9a9;transform:translate(0.80px,0.15px) scaleX(0.9051);">Customize...</span><svg class="a" style="left:242.3px;top:311.5px" width="10" height="10" viewBox="0 0 10 10"><circle cx="5" cy="5" r="4.100" fill="#fbfbfb" stroke="#6a6a6a" stroke-width="0.800"/></svg><span class="t" style="left:256px;top:310px;font-size:7.6px;line-height:12px;color:#000;font-weight:700;-webkit-text-stroke:0;transform:translate(0.00px,0.75px) scaleX(1.0443);">Block the connection</span><div class="a" style="left:402px;top:462.300px;width:54.80000000000001px;height:14.400px;background:#fdfdfd;border:0.800px solid #c9c9c9;border-radius:2.500px;box-sizing:border-box;"></div><span class="t" style="left:418px;top:464px;font-size:7.6px;line-height:12px;color:#000;transform:translate(0.50px,0.15px) scaleX(0.9429);">&lt; Back</span><div class="a" style="left:460.4px;top:462.300px;width:49.200000000000045px;height:14.400px;background:#fdfdfd;border:1px solid #2b6fd0;border-radius:2.500px;box-sizing:border-box;"></div><span class="t" style="left:474px;top:464px;font-size:7.6px;line-height:12px;color:#000;transform:translate(0.70px,0.15px) scaleX(0.9381);">Next &gt;</span><div class="a" style="left:514.5px;top:462.300px;width:55.5px;height:14.400px;background:#fdfdfd;border:0.800px solid #c9c9c9;border-radius:2.500px;box-sizing:border-box;"></div><span class="t" style="left:530px;top:464px;font-size:7.6px;line-height:12px;color:#000;transform:translate(0.50px,0.15px) scaleX(0.9729);">Cancel</span><svg class="a" style="left:440px;top:0" width="400" height="20" viewBox="440 0 400 20">
<defs><linearGradient id="rdp" x1="0" y1="0" x2="0" y2="1">
<stop offset="0" stop-color="#7aa3d6"/><stop offset="0.420" stop-color="#4a7fc0"/><stop offset="0.450" stop-color="#063a82"/><stop offset="0.780" stop-color="#07408c"/><stop offset="0.880" stop-color="#2f68b0"/><stop offset="0.960" stop-color="#3f78bc"/><stop offset="1" stop-color="#b9c6d8"/>
</linearGradient></defs>
<polygon points="448,0 832,0 814.500,17.800 465.800,17.800" fill="url(#rdp)"/>
<rect x="468.300" y="0" width="14.200" height="13.500" fill="#2f7acc" opacity="0.450" stroke="#4a90d8" stroke-width="0.600"/>
<rect x="607" y="0" width="66" height="17.800" fill="#a72b2f"/>
<g stroke="#fff" fill="none">
<path d="M472 7.500h3.400M475.400 4.300v6.600" stroke-width="1.300"/><polygon points="476,6.300 479.300,5.300 480.500,5.300 480.500,10.100 479.300,10.100 476,9" fill="#fff" stroke="none"/>
<path d="M487.300 11v-1.600M489.400 11v-4.200M491.400 11v-6.200" stroke-width="1.200"/><path d="M493.500 11v-8" stroke-width="1" opacity="0.600"/>
<path d="M771 9.500h5.300" stroke-width="2"/>
<rect x="786" y="6.200" width="4" height="4" stroke-width="1.100"/><path d="M788 6v-1.800h4.200v4.200h-1.800" stroke-width="1"/>
<path d="M801.800 5l5.200 5.200M807 5l-5.200 5.200" stroke-width="1.700"/>
</g>
</svg><div class="a" style="left:0;top:688px;width:1280px;height:32px;background:#f1f1f1;border-top:0.600px solid #d8d8d8;box-sizing:border-box;"></div><svg class="a" style="left:484.500px;top:696.500px" width="16" height="16" viewBox="0 0 16 16">
<defs><linearGradient id="wl" x1="0" y1="0" x2="1" y2="1"><stop offset="0" stop-color="#38b8f4"/><stop offset="1" stop-color="#0a6fd6"/></linearGradient></defs>
<rect x="0" y="0" width="7.300" height="7.300" fill="url(#wl)"/><rect x="8.200" y="0" width="7.300" height="7.300" fill="url(#wl)"/><rect x="0" y="8.200" width="7.300" height="7.300" fill="url(#wl)"/><rect x="8.200" y="8.200" width="7.300" height="7.300" fill="url(#wl)"/></svg><div class="a" style="left:509px;top:693.500px;width:145.500px;height:20.700px;background:#fbfbfb;border:0.700px solid #dddddd;border-radius:10.500px;box-sizing:border-box;"></div><svg class="a" style="left:515px;top:698px" width="12" height="12" viewBox="0 0 12 12"><circle cx="5.200" cy="5.200" r="3.500" fill="none" stroke="#1a1a1a" stroke-width="1.200"/><path d="M7.800 7.800l2.800 2.800" stroke="#1a1a1a" stroke-width="1.300" stroke-linecap="round"/></svg><span class="t" style="left:533px;top:696px;font-size:10.3px;line-height:15px;color:#555;transform:translate(0.40px,0.72px) scaleX(0.8456);">Search</span><div class="a" style="left:667.600px;top:696.400px;width:12px;height:10.800px;background:#e9e9e9;border-radius:1px;box-shadow:0 0 1px #ccc;"></div><div class="a" style="left:663px;top:700.600px;width:12.300px;height:10.800px;background:#1a1a1a;border-radius:1px;"></div><div class="a" style="left:667.600px;top:700.600px;width:7.700px;height:6.600px;background:#b9b9b9;"></div><svg class="a" style="left:692.600px;top:696.700px" width="17" height="15" viewBox="0 0 17 15">
<path d="M0.500 1.800c0-0.700 0.500-1.200 1.200-1.200h3.800l1.600 1.600h8.200c0.700 0 1.200 0.500 1.200 1.200v1.600h-16z" fill="#e8a818"/>
<rect x="0.500" y="3" width="16" height="11.400" rx="1.200" fill="#fcd045"/>
<path d="M3.600 14.400v-3.600c0-0.600 0.400-1 1-1h7.800c0.600 0 1 0.400 1 1v3.600z" fill="#1a80e0"/></svg><svg class="a" style="left:721.700px;top:696px" width="17" height="16" viewBox="0 0 17 16">
<rect width="16.600" height="15.800" fill="#a3262b"/><path d="M0.800 7.600C1.400 -0.800 6 -0.800 7.400 7.600S14.400 17 15.800 7.600" fill="none" stroke="#fff" stroke-width="1.300"/><path d="M0.500 7.900h15.600" stroke="#fff" stroke-width="0.900"/></svg><svg class="a" style="left:751px;top:697.400px" width="17" height="13" viewBox="0 0 17 13">
<rect x="0.200" y="0.200" width="16.200" height="12.300" rx="1.300" fill="#35a9ee" stroke="#bfe4fb" stroke-width="0.800"/>
<circle cx="5.800" cy="5.600" r="3.300" fill="#1565c8"/><path d="M5.800 5.600v-3.300a3.300 3.300 0 0 1 3.300 3.300z" fill="#f39a2a"/>
<path d="M11 3.500l2.600 2M11.400 7.500l3-4.500" stroke="#d8f0ff" stroke-width="0.900"/><path d="M3 10.600h5" stroke="#1565c8" stroke-width="1.200"/><path d="M10 10.600h4.500M10.500 9h4" stroke="#d8f0ff" stroke-width="0.700"/></svg><div class="a" style="left:757px;top:714.800px;width:4px;height:1.600px;background:#5a5a5a;border-radius:1px;"></div><div class="a" style="left:776px;top:691.700px;width:25.200px;height:25.300px;background:#fafafa;border:0.600px solid #e6e6e6;border-radius:3px;box-sizing:border-box;"></div><svg class="a" style="left:780px;top:696px" width="17" height="16" viewBox="0 0 17 16">
<circle cx="11.600" cy="5" r="4.600" fill="#2a78d8"/><path d="M8.600 3c2-2.600 4.600-1.600 4.600 0.200s-1.600 2-1 3.400 3 0.600 3.400 2" fill="none" stroke="#4fc238" stroke-width="1.900"/>
<path d="M0.600 4.600l8.600 1.600 2.600 1.400v7.400l-2.600-1-8.600-1.400z" fill="#8a3f26"/><path d="M9.200 6.200l2.600 1.400v7.400l-2.600-1z" fill="#5e2a18"/>
<path d="M0.600 7.200l8.600 1.600M0.600 10l8.600 1.500M4.600 5.400v2.500M3 7.600v2.700M6.800 8.300v2.800M4.600 10.600v2.600" stroke="#b8714e" stroke-width="0.500"/></svg><div class="a" style="left:783.300px;top:715px;width:10.400px;height:2px;background:#0b60d0;border-radius:1px;"></div><svg class="a" style="left:1147px;top:700.500px" width="10" height="7" viewBox="0 0 10 7"><path d="M1 5.400l3.900-3.900 3.900 3.900" fill="none" stroke="#222" stroke-width="1.100"/></svg><span class="t" style="left:1169px;top:694px;font-size:7.8px;line-height:12px;color:#000;transform:translate(0.60px,0.04px) scaleX(0.9109);-webkit-text-stroke:0.25px #000;">ENG</span><span class="t" style="left:1172px;top:704px;font-size:7.8px;line-height:12px;color:#000;transform:translate(0.40px,0.54px) scaleX(0.9130);-webkit-text-stroke:0.25px #000;">US</span><svg class="a" style="left:1197px;top:697.500px" width="12" height="12" viewBox="0 0 12 12">
<rect x="0.600" y="1.600" width="8" height="7" rx="0.800" fill="none" stroke="#222" stroke-width="0.900"/><path d="M2.600 11h4.600M3.600 8.600v2.400M6 8.600v2.400" stroke="#222" stroke-width="0.900"/>
<circle cx="9.300" cy="2.400" r="1.500" fill="#f1f1f1" stroke="#222" stroke-width="0.800"/><path d="M9.300 3.900v3.600" stroke="#222" stroke-width="0.900"/></svg><svg class="a" style="left:1213px;top:698.500px" width="12" height="10" viewBox="0 0 12 10">
<path d="M0.600 3.600h1.800l2.400-2.200v7.200l-2.400-2.200h-1.800z" fill="none" stroke="#222" stroke-width="0.800" stroke-linejoin="round"/>
<path d="M6.200 3.400a2.200 2.200 0 0 1 0 3.200M7.800 2.200a4 4 0 0 1 0 5.600M9.400 1a5.800 5.800 0 0 1 0 8" fill="none" stroke="#222" stroke-width="0.800"/></svg><span class="t" style="left:1238px;top:693px;font-size:7.8px;line-height:12px;color:#000;transform:translate(0.50px,0.64px) scaleX(0.9812);-webkit-text-stroke:0.25px #000;">2:13 PM</span><span class="t" style="left:1234px;top:704px;font-size:7.8px;line-height:12px;color:#000;transform:translate(0.70px,0.14px) scaleX(1.0639);-webkit-text-stroke:0.25px #000;">8/9/2025</span></div></body></html>
